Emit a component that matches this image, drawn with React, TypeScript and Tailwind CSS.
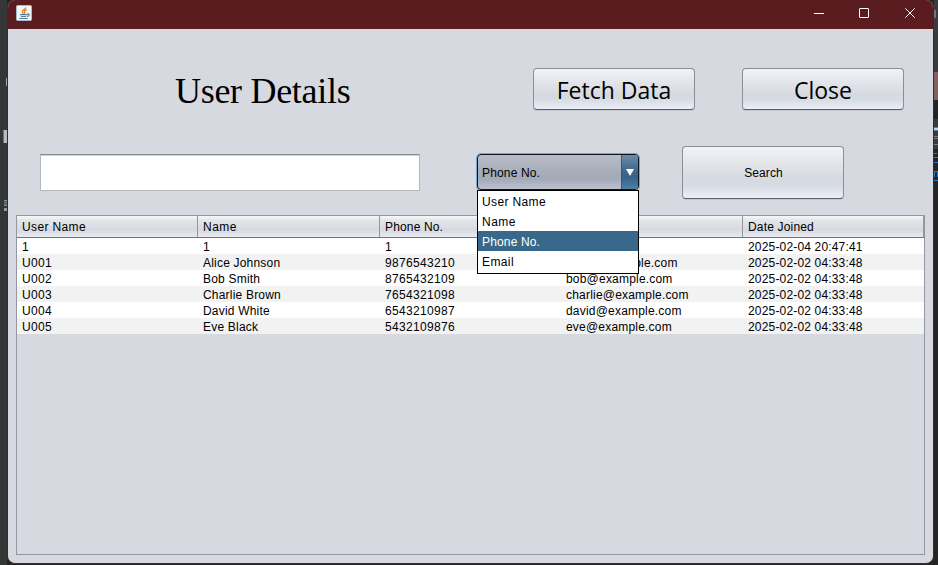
import React from "react";

const columns = [
  { label: "User Name", width: "w-[181px]", tracking: "tracking-[0.33px]", head: "tracking-[0.36px]" },
  { label: "Name", width: "w-[182px]", tracking: "tracking-[0.2px]", head: "tracking-[0.5px]" },
  { label: "Phone No.", width: "w-[181px]", tracking: "tracking-[0.33px]", head: "tracking-[0.15px]" },
  { label: "Email", width: "w-[182px]", tracking: "tracking-[0.2px]", head: "tracking-[0.4px]" },
  { label: "Date Joined", width: "w-[181px]", tracking: "tracking-[0.17px]", head: "tracking-[0.17px]" },
];

const rows = [
  ["1", "1", "1", "1", "2025-02-04 20:47:41"],
  ["U001", "Alice Johnson", "9876543210", "alice@example.com", "2025-02-02 04:33:48"],
  ["U002", "Bob Smith", "8765432109", "bob@example.com", "2025-02-02 04:33:48"],
  ["U003", "Charlie Brown", "7654321098", "charlie@example.com", "2025-02-02 04:33:48"],
  ["U004", "David White", "6543210987", "david@example.com", "2025-02-02 04:33:48"],
  ["U005", "Eve Black", "5432109876", "eve@example.com", "2025-02-02 04:33:48"],
];

const options = [
  { label: "User Name", tracking: "tracking-[0.36px]" },
  { label: "Name", tracking: "tracking-[0.5px]" },
  { label: "Phone No.", tracking: "tracking-[0.15px]" },
  { label: "Email", tracking: "tracking-[0.4px]" },
];

function JavaIcon() {
  return (
    <svg width="16" height="16" viewBox="0 0 16 16">
      <rect x="0.5" y="0.5" width="15" height="15" rx="1" fill="#f3f5f6" stroke="#a9bac5" />
      <path d="M9.8 2.5C9.6 4.6 6 4.8 6.3 6.8c.1.8 1 1.2.8 2M10.8 4.8C9 5.2 8 6 8.6 7c.3.6.3 1-.2 1.6" fill="none" stroke="#e8842c" strokeWidth="1.4" />
      <path d="M4 9.6h7.2M4.8 11.5h5.4M3.2 13.5h8.6M11.2 9c2.8-.8 2.8 1.8-.2 2.4" fill="none" stroke="#547c99" strokeWidth="1.2" />
    </svg>
  );
}

function TitleBar() {
  return (
    <div className="flex h-[29px] shrink-0 justify-between bg-[#5b1c1f]">
      <div className="pl-2 pt-[5px]">
        <JavaIcon />
      </div>
      <div className="flex pt-2 pr-[18px]">
        <svg className="mr-[35px]" width="10" height="10" viewBox="0 0 10 10" fill="none" stroke="white">
          <path d="M0 5.5h10" />
        </svg>
        <svg className="mr-9" width="10" height="10" viewBox="0 0 10 10" fill="none" stroke="white">
          <rect x="0.5" y="0.5" width="9" height="9" rx="0.5" />
        </svg>
        <svg width="10" height="10" viewBox="0 0 10 10" fill="none" stroke="white">
          <path d="M0.3 0.3l9.4 9.4M9.7 0.3L0.3 9.7" />
        </svg>
      </div>
    </div>
  );
}

function Button({ children, className }: { children: React.ReactNode; className: string }) {
  return (
    <button
      className={`flex w-[162px] items-center justify-center rounded-[4px] border border-[#8b8e95] border-b-[#5d6067] bg-[linear-gradient(#f2f3f6,#e2e4e9_35%,#d6d9e0_65%,#d8dce5_78%,#eceff8)] shadow-[0_1px_0_#c2c5cc] ${className}`}
    >
      {children}
    </button>
  );
}

function ComboBox() {
  return (
    <div className="relative mt-2 h-[37px] w-[162px]">
      <div className="flex h-[36px] overflow-hidden rounded-[4px] border border-[#10141c] bg-[linear-gradient(#b9bdc8,#a7adba_48%,#a3a9b6_70%,#bbc1ce)] shadow-[0_0_0_1px_#78a4ce]">
        <div className="flex flex-1 items-center pl-1 pt-px tracking-[0.15px]">Phone No.</div>
        <div className="flex w-[17px] items-center justify-center border-l border-[#315b7b] bg-[linear-gradient(#6b8cab,#41698b_45%,#33628a_65%,#527fa5)]">
          <svg width="8" height="7" viewBox="0 0 8 7">
            <path d="M0 0h8L4 7z" fill="white" />
          </svg>
        </div>
      </div>
      <div className="absolute left-0 top-[36px] z-10 h-[84px] w-[162px] border border-black bg-white">
        {options.map((o) => (
          <div
            key={o.label}
            className={`flex h-5 items-center pl-1 pt-px ${o.tracking} ${o.label === "Phone No." ? "bg-[#39698a] text-white" : ""}`}
          >
            {o.label}
          </div>
        ))}
      </div>
    </div>
  );
}

function Table() {
  return (
    <div className="mx-2 mb-2 flex-1 border border-[#9297a1]">
      <div className="flex h-[22px] border-b border-[#6f747e] bg-[linear-gradient(#f8f8fa,#e4e6ea_20%,#dcdee3_50%,#d6d9df_65%,#e8ebf3)]">
        {columns.map((c) => (
          <div
            key={c.label}
            className={`flex items-center border-r border-[#9297a1] pl-[5px] ${c.head} ${c.width}`}
          >
            {c.label}
          </div>
        ))}
      </div>
      {rows.map((r, i) => (
        <div key={i} className={`flex h-4 items-center ${i % 2 ? "bg-[#f2f2f2]" : "bg-white"}`}>
          {r.map((v, j) => (
            <div key={j} className={`pl-[5px] pt-px ${columns[j].width} ${columns[j].tracking}`}>
              {v}
            </div>
          ))}
        </div>
      ))}
    </div>
  );
}

export default function App() {
  return (
    <div className="flex h-[565px] w-[938px] overflow-hidden bg-[#242424] font-['Liberation_Sans',Arial,sans-serif] text-[12px] leading-[16px] text-black">
      <div className="relative w-[7px] bg-[#343637]">
        <div className="absolute left-[6px] top-[78px] h-2 w-px bg-[#a2a5a5]" />
        <div className="absolute left-[3px] top-[130px] h-[13px] w-1 border-l border-[#70757d] bg-[#b6b9c1]" />
        <div className="absolute left-1 top-[200px] h-[6px] w-[3px] border-y border-[#829099] bg-[#506877]" />
        <div className="absolute left-1 top-[208px] h-[3px] w-[3px] bg-[#939ca1]" />
      </div>
      <div className="flex h-[564px] w-[927px] flex-col overflow-hidden rounded-[8px] border border-t-0 border-[#5b1c1f] bg-[#d6d9e0]">
        <TitleBar />
        <div className="flex h-[117px] shrink-0 pl-[167px] pt-[39px]">
          <h1 className="w-[358px] pt-[3px] font-['Liberation_Serif','Times_New_Roman',serif] text-[36px] leading-[40px] tracking-[-0.3px]">
            User Details
          </h1>
          <div className="flex h-[42px] gap-[47px] font-['Open_Sans','Noto_Sans',sans-serif] text-[23px]">
            <Button className="pt-px">Fetch Data</Button>
            <Button className="pt-px">Close</Button>
          </div>
        </div>
        <div className="flex h-[69px] shrink-0 pl-8">
          <input className="mr-[57px] mt-2 h-[37px] w-[380px] border border-[#b5b8be] border-t-[#888b91] bg-white shadow-[inset_0_1px_0_#d0d2d6]" />
          <ComboBox />
          <div className="ml-[43px] flex h-[53px]">
            <Button className="pl-px tracking-[0.1px]">Search</Button>
          </div>
        </div>
        <Table />
      </div>
      <div className="relative w-1 bg-[#242423]">
        <div className="absolute left-0 top-0 h-[72px] w-1 bg-[#3a3b3d]" />
        <div className="absolute left-0 top-[72px] h-7 w-1 bg-[#84605f]" />
        <div className="absolute left-0 top-[119px] h-[30px] w-1 bg-[#3a3b3c]" />
        <div className="absolute left-0 top-[127px] h-1 w-1 border-y border-[#5878a8] bg-[#c3d4ea]" />
        <div className="absolute left-0 top-[136px] h-[3px] w-1 border-y border-[#77797a]" />
        <div className="absolute left-0 top-[144px] h-px w-1 bg-[#77797a]" />
        <div className="absolute left-0 top-[153px] h-px w-[3px] bg-[#2878d0]" />
        <div className="absolute left-0 top-[157px] h-px w-1 bg-[#2878d0]" />
        <div className="absolute left-0 top-[162px] h-px w-1 bg-[#2878d0]" />
        <div className="absolute left-0 top-[171px] h-[6px] w-1 border-x border-t border-[#2878d0]" />
        <div className="absolute left-0 top-[180px] h-px w-1 bg-[#2878d0]" />
        <div className="absolute left-0 top-[10px] h-2 w-[2px] bg-[#687784]" />
      </div>
    </div>
  );
}
